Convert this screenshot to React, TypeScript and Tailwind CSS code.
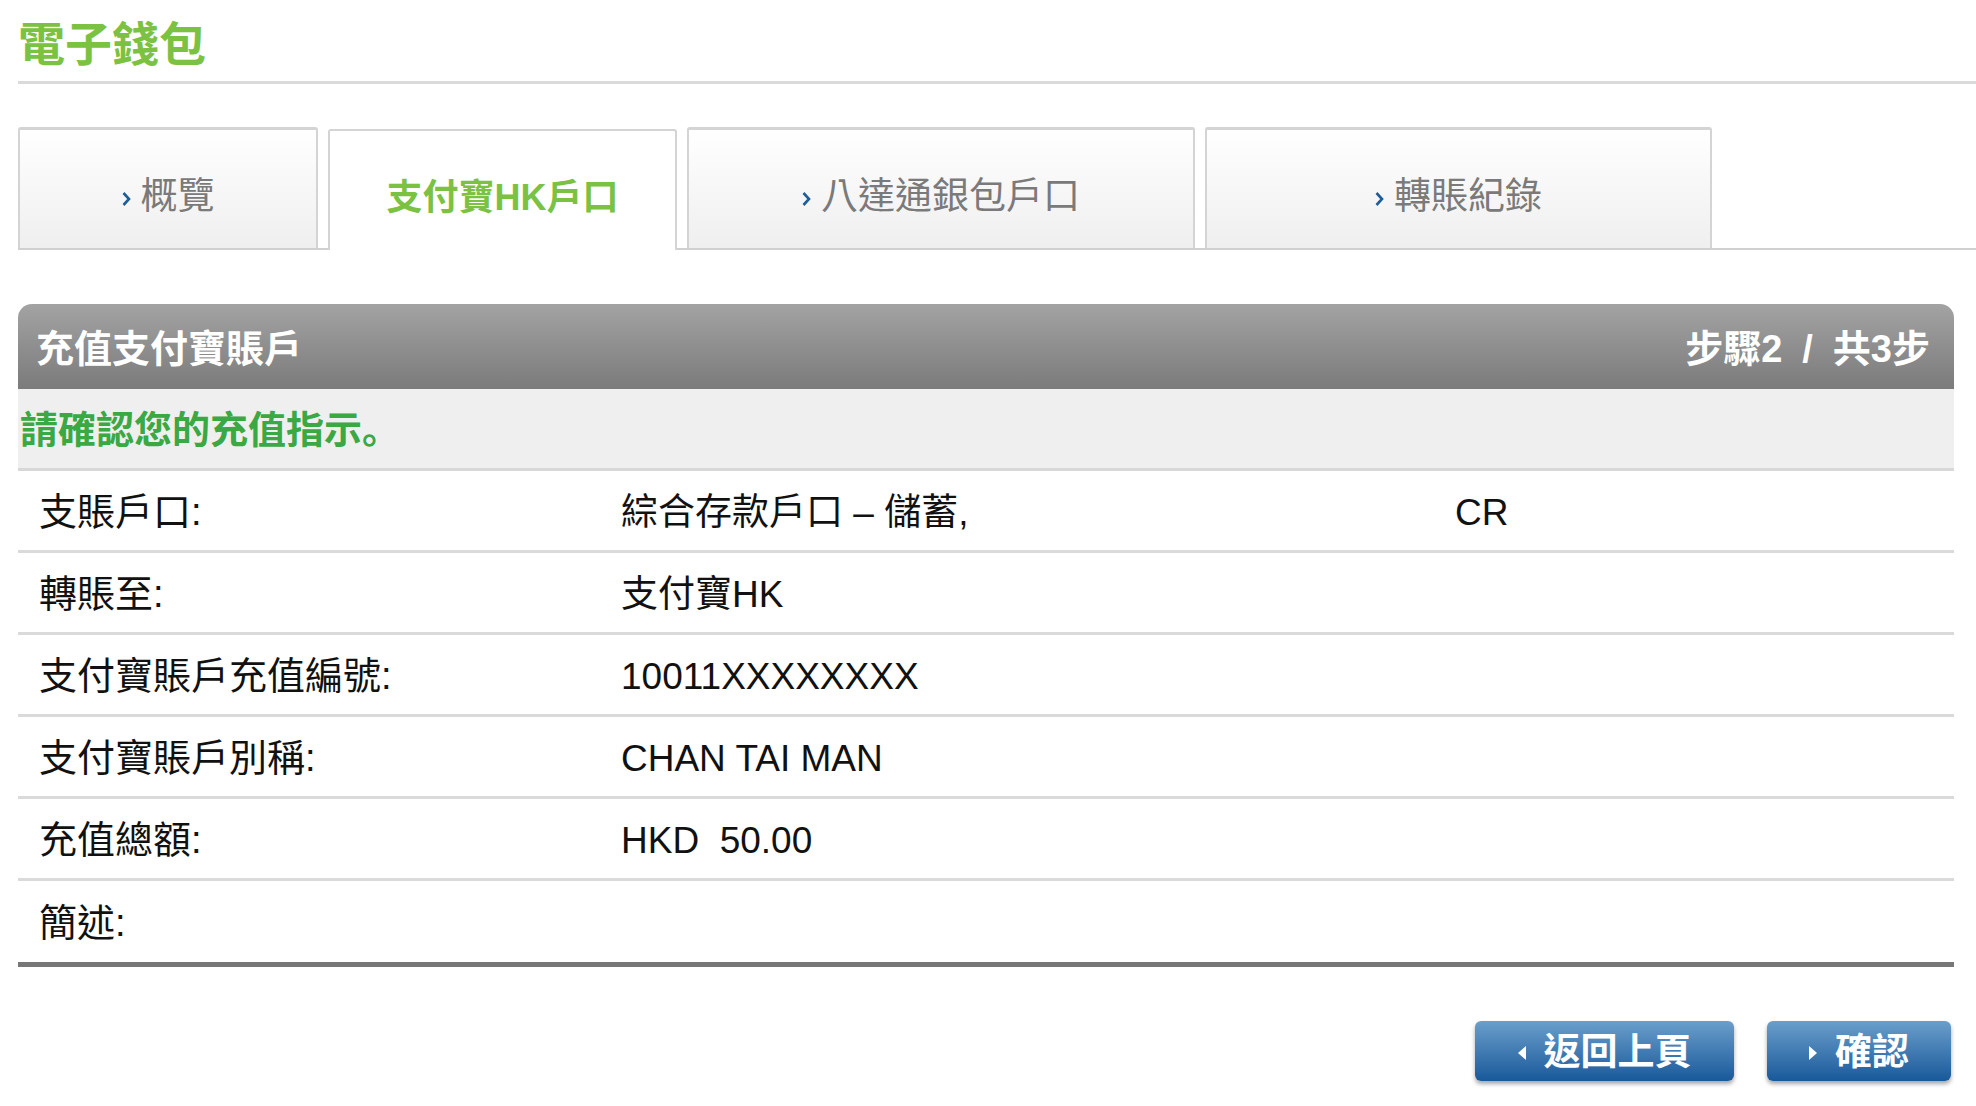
const font = { fontFamily: '"Liberation Sans", "Noto Sans CJK TC", sans-serif' }
const scFont = { fontFamily: '"Liberation Sans", "Noto Sans CJK SC", sans-serif' }

const tabs = [
  { label: '概覽', width: 'w-[300px]', active: false },
  { label: '支付寶HK戶口', width: 'w-[349px]', active: true },
  { label: '八達通銀包戶口', width: 'w-[508px]', active: false },
  { label: '轉賬紀錄', width: 'w-[507px]', active: false },
]

const rows: { label: string; value: string; extra?: string }[] = [
  { label: '支賬戶口:', value: '綜合存款戶口 – 儲蓄, ', extra: 'CR' },
  { label: '轉賬至:', value: '支付寶HK' },
  { label: '支付寶賬戶充值編號:', value: '10011XXXXXXXX' },
  { label: '支付寶賬戶別稱:', value: 'CHAN TAI MAN' },
  { label: '充值總額:', value: 'HKD\u00a0\u00a050.00' },
  { label: '簡述:', value: '' },
]

function Tab({ label, width, active }: { label: string; width: string; active: boolean }) {
  if (active) {
    return (
      <div
        className={`${width} h-[121px] -mb-[2px] pt-[14px] flex items-center justify-center bg-white border-x-2 border-t-2 border-[#d4d4d4] rounded-t-[3px]`}
      >
        <span className="text-[36px] font-bold text-[#7cc242]">{label}</span>
      </div>
    )
  }
  return (
    <div
      className={`${width} h-[121px] pt-[15px] flex items-center justify-center gap-[10px] bg-gradient-to-b from-white to-[#efefef] border-x-2 border-t-[3px] border-[#d4d4d4] rounded-t-[3px]`}
    >
      <svg width="9" height="16" viewBox="0 0 9 16" className="mt-[4px]">
        <path d="M1.5 2 L7 8 L1.5 14" fill="none" stroke="#1f5d99" strokeWidth="2.6" />
      </svg>
      <span className="text-[37px] text-[#7a7a7a]">{label}</span>
    </div>
  )
}

function Triangle({ dir }: { dir: 'left' | 'right' }) {
  return dir === 'left' ? (
    <span className="inline-block w-0 h-0 border-y-[7px] border-y-transparent border-r-[8px] border-r-white" />
  ) : (
    <span className="inline-block w-0 h-0 border-y-[7px] border-y-transparent border-l-[8px] border-l-white" />
  )
}

export default function App() {
  return (
    <div className="min-h-[1106px] bg-white pl-[18px] pt-[18px]" style={font}>
      <div className="h-[66px] border-b-[3px] border-[#dadada]">
        <h1 className="text-[47px] leading-[54px] font-bold text-[#7cc242]">電子錢包</h1>
      </div>

      <div className="mt-[43px] flex items-end gap-[10px] border-b-2 border-[#d0d0d0]">
        {tabs.map((t) => (
          <Tab key={t.label} {...t} />
        ))}
      </div>

      <div className="mt-[54px] mr-[22px]">
        <div className="h-[85px] pt-[6px] flex items-center justify-between px-[18px] rounded-t-[14px] bg-gradient-to-b from-[#a3a3a3] to-[#7b7b7b] text-white font-bold">
          <span className="text-[38px]">充值支付寶賬戶</span>
          <span className="text-[38px] pr-[6px] flex items-center gap-[20px]">
            <span>步驟2</span>
            <span>/</span>
            <span>共3步</span>
          </span>
        </div>
        <div className="h-[82px] pt-[4px] flex items-center px-[2px] bg-[#efefef] border-b-[3px] border-[#d8d8d8]">
          <span className="text-[38px] font-bold text-[#3aa843]" style={scFont}>
            請確認您的充值指示。
          </span>
        </div>
        {rows.map((r, i) => (
          <div
            key={r.label}
            className={`h-[82px] pt-[4px] flex items-center text-[#111] ${
              i === rows.length - 1 ? 'h-[86px] border-b-[5px] border-[#777]' : 'border-b-[3px] border-[#dadada]'
            }`}
          >
            <span className="w-[603px] pl-[21px] shrink-0 text-[38px]">{r.label}</span>
            <span className="w-[834px] shrink-0 text-[37px]">{r.value}</span>
            {r.extra && <span className="text-[37px]">{r.extra}</span>}
          </div>
        ))}

        <div className="mt-[54px] flex justify-end gap-[33px] pr-[3px]">
          <button className="w-[259px] h-[60px] pt-[3px] flex items-center justify-center gap-[18px] rounded-[6px] bg-gradient-to-b from-[#6a9fcb] to-[#17599a] shadow-[0_3px_4px_rgba(0,0,0,0.35)] text-white text-[37px] font-bold">
            <Triangle dir="left" />
            返回上頁
          </button>
          <button className="w-[184px] h-[60px] pt-[3px] flex items-center justify-center gap-[18px] rounded-[6px] bg-gradient-to-b from-[#6a9fcb] to-[#17599a] shadow-[0_3px_4px_rgba(0,0,0,0.35)] text-white text-[37px] font-bold">
            <Triangle dir="right" />
            確認
          </button>
        </div>
      </div>
    </div>
  )
}
